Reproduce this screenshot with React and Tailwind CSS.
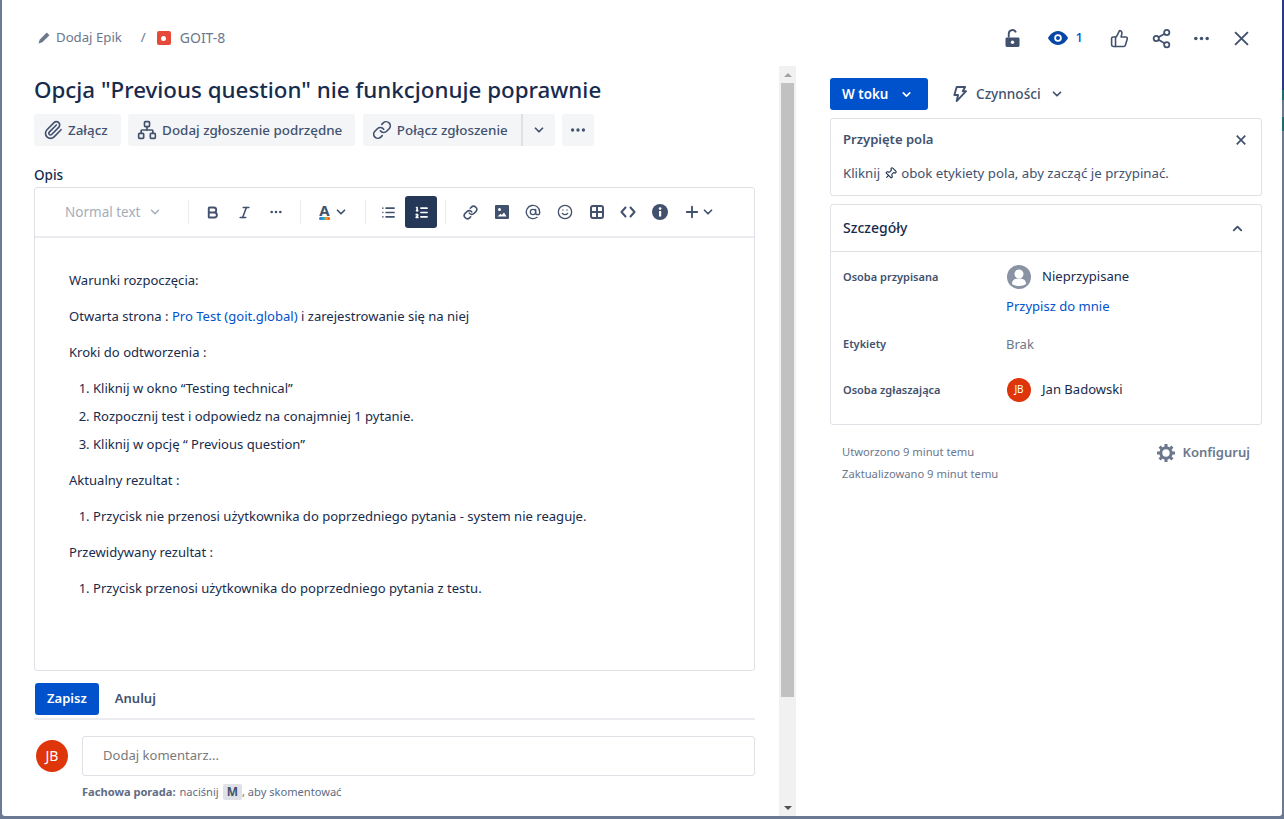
import { Paperclip, Network, Link, ChevronDown, ChevronUp, Bold, Italic, List, ListOrdered, AtSign, Smile, Plus, ThumbsUp, Share2, Pin } from 'lucide-react';

const Dots = ({ className = '' }) => (
  <svg width="24" height="24" viewBox="0 0 24 24" className={className} fill="currentColor">
    <circle cx="5.5" cy="12" r="2" />
    <circle cx="12" cy="12" r="2" />
    <circle cx="18.5" cy="12" r="2" />
  </svg>
);

const Cross = ({ size, width }) => (
  <svg width={size} height={size} viewBox="0 0 14 14" fill="none" stroke="currentColor" strokeWidth={width}>
    <path d="M1 1l12 12M13 1 1 13" />
  </svg>
);

const Divider = () => <div className="w-px h-6 bg-[#ebecf0]" />;

const ToolIcon = ({ children, active }) => (
  <div className={`w-8 h-8 flex items-center justify-center rounded-[3px] ${active ? 'bg-[#253858] text-white' : 'text-[#42526e]'}`}>
    {children}
  </div>
);

const ActionButton = ({ icon, label }) => (
  <div className="h-8 flex items-center gap-[5px] pl-[9px] pr-[13px] bg-[#f4f5f7] rounded-[3px] text-[#42526e] font-medium text-[13.4px]">
    {icon}
    <span>{label}</span>
  </div>
);

function Avatar({ size }) {
  return (
    <div className={`rounded-full bg-[#de350b] text-white flex items-center justify-center ${size}`}>JB</div>
  );
}

function Description() {
  return (
    <div className="h-[433px] px-[34px] pt-[30px] text-[#172b4d] leading-6">
      <p>Warunki rozpoczęcia:</p>
      <p className="mt-3">Otwarta strona : <span className="text-[#0052cc]">Pro Test (goit.global)</span> i zarejestrowanie się na niej</p>
      <p className="mt-3">Kroki do odtworzenia :</p>
      <ol className="mt-3 ml-6 list-decimal space-y-1">
        <li>Kliknij w okno “Testing technical”</li>
        <li>Rozpocznij test i odpowiedz na conajmniej 1 pytanie.</li>
        <li>Kliknij w opcję “ Previous question”</li>
      </ol>
      <p className="mt-3">Aktualny rezultat :</p>
      <ol className="mt-3 ml-6 list-decimal">
        <li>Przycisk nie przenosi użytkownika do poprzedniego pytania - system nie reaguje.</li>
      </ol>
      <p className="mt-3">Przewidywany rezultat :</p>
      <ol className="mt-3 ml-6 list-decimal">
        <li>Przycisk przenosi użytkownika do poprzedniego pytania z testu.</li>
      </ol>
    </div>
  );
}

function Toolbar() {
  return (
    <div className="h-[50px] flex items-center border-b-2 border-[#ebecf0] pl-[30px]">
      <div className="w-[123px] flex items-center gap-2 text-[#a5adba] text-[13.5px]">
        <span>Normal text</span>
        <ChevronDown size={14} strokeWidth={2.5} />
      </div>
      <Divider />
      <div className="flex items-center ml-[7px]">
        <ToolIcon><Bold size={15} strokeWidth={3} /></ToolIcon>
        <ToolIcon><Italic size={15} strokeWidth={2.5} /></ToolIcon>
        <ToolIcon><Dots className="w-4 h-4" /></ToolIcon>
      </div>
      <div className="ml-2"><Divider /></div>
      <div className="flex items-center gap-1 ml-[18px] w-[46px] text-[#42526e]">
        <div className="flex flex-col items-center leading-none">
          <span className="text-[15px] font-bold leading-[13px]">A</span>
          <div className="w-[11px] h-[3px] rounded-sm bg-[linear-gradient(90deg,#6554c0_0%,#00b8d9_40%,#ff991f_70%,#de350b_100%)]" />
        </div>
        <ChevronDown size={14} strokeWidth={3} />
      </div>
      <Divider />
      <div className="flex items-center gap-px ml-[6px]">
        <ToolIcon><List size={15} strokeWidth={2.5} /></ToolIcon>
        <ToolIcon active><ListOrdered size={15} strokeWidth={2.5} /></ToolIcon>
      </div>
      <div className="ml-2"><Divider /></div>
      <div className="flex items-center ml-2">
        <ToolIcon><Link size={15} strokeWidth={2.5} /></ToolIcon>
        <ToolIcon>
          <svg width="14" height="14" viewBox="0 0 14 14" fill="currentColor">
            <path d="M1 0h12a1 1 0 0 1 1 1v12a1 1 0 0 1-1 1H1a1 1 0 0 1-1-1V1a1 1 0 0 1 1-1Zm1.5 11.5h9L9 7.500l-2.200 2.600-1.300-1.400Z" />
            <circle cx="4.500" cy="4.500" r="1.500" fill="#fff" />
          </svg>
        </ToolIcon>
        <div className="-ml-[1px]"><ToolIcon><AtSign size={16} strokeWidth={2} /></ToolIcon></div>
        <ToolIcon><Smile size={16} strokeWidth={2} /></ToolIcon>
        <ToolIcon>
          <svg width="14" height="14" viewBox="0 0 14 14" fill="none" stroke="currentColor" strokeWidth="2">
            <rect x="1" y="1" width="12" height="12" rx="2" />
            <path d="M7 1v12M1 7h12" />
          </svg>
        </ToolIcon>
        <div className="-ml-[1px]">
          <ToolIcon>
            <svg width="16" height="14" viewBox="0 0 16 14" fill="none" stroke="currentColor" strokeWidth="2" strokeLinecap="round" strokeLinejoin="round">
              <path d="M5.500 2.500 1.500 7l4 4.500M10.500 2.500l4 4.500-4 4.500" />
            </svg>
          </ToolIcon>
        </div>
        <ToolIcon>
          <svg width="16" height="16" viewBox="0 0 16 16">
            <circle cx="8" cy="8" r="8" fill="currentColor" />
            <rect x="7" y="7" width="2.200" height="5.500" fill="#fff" />
            <circle cx="8.100" cy="4.600" r="1.300" fill="#fff" />
          </svg>
        </ToolIcon>
        <div className="flex items-center ml-[7px] text-[#42526e]">
          <Plus size={18} strokeWidth={2.5} />
          <ChevronDown size={14} strokeWidth={3} />
        </div>
      </div>
    </div>
  );
}

function Scrollbar() {
  return (
    <div className="w-[17px] bg-[#f1f1f1] flex flex-col items-center">
      <div className="h-[17px] flex items-center justify-center">
        <div className="w-0 h-0 border-x-[4px] border-x-transparent border-b-[4px] border-b-[#a3a3a3]" />
      </div>
      <div className="w-[13px] h-[614px] bg-[#c1c1c1]" />
      <div className="flex-1 flex items-end justify-center pb-[6px]">
        <div className="w-0 h-0 border-x-[4px] border-x-transparent border-t-[4px] border-t-[#505050]" />
      </div>
    </div>
  );
}

function LeftColumn() {
  return (
    <div className="w-[794px] flex">
      <div className="w-[777px] pl-8 pr-6">
        <h1 className="text-[22.35px] font-medium leading-7 text-[#172b4d] mt-[10px]">Opcja "Previous question" nie funkcjonuje poprawnie</h1>
        <div className="flex items-center mt-[10px] gap-[7.5px]">
          <ActionButton icon={<Paperclip size={20} strokeWidth={2} />} label="Załącz" />
          <ActionButton icon={<Network size={20} strokeWidth={2} />} label="Dodaj zgłoszenie podrzędne" />
          <div className="flex h-8 bg-[#f4f5f7] rounded-[3px] text-[#42526e] font-medium text-[13.4px]">
            <div className="flex items-center gap-[5px] pl-[9px] pr-[13px] border-r-2 border-[#dfe1e6]">
              <Link size={20} strokeWidth={2} />
              <span>Połącz zgłoszenie</span>
            </div>
            <div className="w-8 flex items-center justify-center"><ChevronDown size={14} strokeWidth={3} /></div>
          </div>
          <div className="w-8 h-8 flex items-center justify-center bg-[#f4f5f7] rounded-[3px] text-[#42526e]"><Dots className="w-[20px] h-[20px]" /></div>
        </div>
        <div className="mt-[19px] text-[#172b4d] font-medium leading-5 text-[13.5px]">Opis</div>
        <div className="mt-[2px] h-[484px] border border-[#dfe1e6] rounded-[3px]">
          <Toolbar />
          <Description />
        </div>
        <div className="flex items-center mt-3 ml-px">
          <div className="h-8 px-3 flex items-center bg-[#0052cc] text-white font-semibold rounded-[3px]">Zapisz</div>
          <div className="h-8 px-4 flex items-center text-[#42526e] font-semibold">Anuluj</div>
        </div>
        <div className="h-[2px] mt-[3px] bg-[#ebecf0]" />
        <div className="flex mt-4 gap-[14px]">
          <div className="ml-[2px] mt-1"><Avatar size="w-8 h-8 text-sm" /></div>
          <div className="flex-1 h-10 flex items-center pl-5 border border-[#dfe1e6] rounded-[3px] text-[#7a7a7a]">Dodaj komentarz...</div>
        </div>
        <div className="ml-12 mt-2 flex items-center text-[11.1px] text-[#5e6c84] leading-4">
          <span className="font-bold mr-1">Fachowa porada:</span>
          <span>naciśnij</span>
          <span className="mx-1 px-[4px] bg-[#dfe1e6] rounded-[2px] font-bold text-[#42526e] text-[12px]">M</span>
          <span className="-ml-1">, aby skomentować</span>
        </div>
      </div>
      <Scrollbar />
    </div>
  );
}

function FieldRow({ label, children, className }) {
  return (
    <div className={`flex px-3 ${className}`}>
      <div className="w-[163px] text-[11px] leading-4 font-semibold text-[#42526e] shrink-0">{label}</div>
      <div className="flex-1">{children}</div>
    </div>
  );
}

function RightColumn() {
  return (
    <div className="w-[432px] ml-[34px] mt-3">
      <div className="flex items-center h-8">
        <div className="w-[98px] h-8 flex items-center gap-2 pl-3 bg-[#0052cc] text-white font-semibold rounded-[3px] text-[13.4px]">
          W toku
          <ChevronDown size={13} strokeWidth={3} className="ml-1" />
        </div>
        <div className="flex items-center ml-6 text-[#42526e] font-medium text-[13.6px]">
          <svg width="15" height="18" viewBox="0 0 16 18" fill="none" stroke="currentColor" strokeWidth="2" strokeLinejoin="round">
            <path d="M5 1.500h9l-2.500 4.500h3.500L5 16.500l1.500-6.500H2.500Z" />
          </svg>
          <span className="ml-[9px]">Czynności</span>
          <ChevronDown size={14} strokeWidth={3} className="ml-[9px]" />
        </div>
      </div>
      <div className="mt-2 h-[78px] border border-[#dfe1e6] rounded-[3px] px-3 pt-px text-[#42526e]">
        <div className="flex items-center justify-between h-[40px]">
          <span className="font-semibold">Przypięte pola</span>
          <div className="mr-[3px]"><Cross size={10} width={2.4} /></div>
        </div>
        <div className="flex items-center mt-[4px] text-[13.25px]">
          Kliknij
          <Pin size={13} strokeWidth={2} className="rotate-45 mx-[4px] text-[#172b4d]" />
          obok etykiety pola, aby zacząć je przypinać.
        </div>
      </div>
      <div className="mt-2 h-[221px] border border-[#dfe1e6] rounded-[3px]">
        <div className="h-[47px] flex items-center justify-between px-3 border-b border-[#dfe1e6] text-[#172b4d] font-medium text-sm">
          <span>Szczegóły</span>
          <ChevronUp size={15} strokeWidth={3} className="text-[#42526e] mr-[4px]" />
        </div>
        <FieldRow label="Osoba przypisana" className="mt-[17px]">
          <div className="flex items-center gap-[11px] -mt-[4px] ml-px text-[#172b4d]">
            <svg width="24" height="24" viewBox="0 0 24 24">
              <circle cx="12" cy="12" r="12" fill="#8993a4" />
              <circle cx="12" cy="9" r="4.500" fill="#fff" />
              <path d="M5 19c0-4 2.500-5.500 7-5.500s7 1.500 7 5.500c-1.500 1-4 2-7 2s-5.500-1-7-2Z" fill="#fff" />
            </svg>
            Nieprzypisane
          </div>
          <div className="text-[#0052cc] mt-[7px] leading-5">Przypisz do mnie</div>
        </FieldRow>
        <FieldRow label="Etykiety" className="mt-[18px] items-center">
          <span className="text-[#6b778c] leading-5">Brak</span>
        </FieldRow>
        <FieldRow label="Osoba zgłaszająca" className="mt-[23px] items-center">
          <div className="flex items-center gap-[11px] ml-px text-[#172b4d]">
            <Avatar size="w-6 h-6 text-[10px]" />
            Jan Badowski
          </div>
        </FieldRow>
      </div>
      <div className="flex justify-between items-start mt-4 px-3 text-[#6b778c]">
        <div className="text-[11.2px] leading-[22px]">
          <div>Utworzono 9 minut temu</div>
          <div>Zaktualizowano 9 minut temu</div>
        </div>
        <div className="flex items-center gap-[7px] mt-[2px] font-semibold">
          <svg width="18" height="18" viewBox="0 0 18 18" fill="none" stroke="currentColor">
            <circle cx="9" cy="9" r="5.200" strokeWidth="3" />
            <path d="M9 0v3M9 15v3M0 9h3M15 9h3M2.600 2.600l2.100 2.100M13.300 13.300l2.100 2.100M15.400 2.600l-2.100 2.100M4.700 13.300l-2.100 2.100" strokeWidth="3" />
          </svg>
          Konfiguruj
        </div>
      </div>
    </div>
  );
}

export default function App() {
  return (
    <div className="w-[1284px] h-[819px] overflow-hidden bg-[#6b7a92] flex text-[13.05px] font-['Noto_Sans',sans-serif]">
      <div className="w-[2px] shrink-0" />
      <div className="w-[1280px] h-[816px] shrink-0 bg-white rounded-b-[3px] flex flex-col">
        <div className="h-[66px] shrink-0 flex items-center pt-[10px] pl-9 pr-[33px] justify-between">
          <div className="flex items-center text-[#6b778c] text-[13.2px]">
            <svg width="12" height="12" viewBox="0 0 11 11" fill="currentColor"><path d="M8 .5 10.500 3 4 9.500 .5 10.500 1.500 7Z" /></svg>
            <span className="ml-[6px]">Dodaj Epik</span>
            <span className="ml-[19px]">/</span>
            <div className="ml-[11px] w-[14px] h-[14px] rounded-[2px] bg-[#e5493a] flex items-center justify-center">
              <div className="w-[5px] h-[5px] rounded-full bg-white" />
            </div>
            <span className="ml-[9px] text-sm">GOIT-8</span>
          </div>
          <div className="flex items-center text-[#42526e]">
            <svg width="15" height="19" viewBox="0 0 16 20" fill="currentColor">
              <path d="M2 9h12a1.500 1.500 0 0 1 1.500 1.500v7A1.500 1.500 0 0 1 14 19H2a1.500 1.500 0 0 1-1.500-1.500v-7A1.500 1.500 0 0 1 2 9Z" />
              <path d="M4 9V5a4 4 0 0 1 7.700-1.500" fill="none" stroke="currentColor" strokeWidth="2" />
              <circle cx="8" cy="14" r="1.800" fill="#fff" />
            </svg>
            <div className="flex items-center ml-[28px] text-[#0747a6]">
              <svg width="20" height="14" viewBox="0 0 20 14">
                <path d="M10 0c5 0 8.500 4 10 7-1.500 3-5 7-10 7S1.500 10 0 7c1.500-3 5-7 10-7Z" fill="currentColor" />
                <circle cx="10" cy="7" r="3.800" fill="#fff" />
                <circle cx="10" cy="7" r="2" fill="currentColor" />
              </svg>
              <span className="ml-2 text-[#0052cc] font-medium">1</span>
            </div>
            <ThumbsUp size={19} strokeWidth={2} className="ml-[27px]" />
            <Share2 size={21} strokeWidth={2} className="ml-[22px]" />
            <Dots className="ml-[19px] w-[21px] h-[21px]" />
            <div className="ml-[22px]"><Cross size={15} width={1.8} /></div>
          </div>
        </div>
        <div className="flex flex-1">
          <LeftColumn />
          <RightColumn />
        </div>
      </div>
      <div className="w-[2px] shrink-0 flex flex-col">
        <div className="h-[90px] bg-[#253a80]" />
        <div className="h-[10px] bg-[#1f6b70]" />
        <div className="h-[17px]" />
        <div className="h-[14px] bg-[#1f6b70]" />
      </div>
    </div>
  );
}
